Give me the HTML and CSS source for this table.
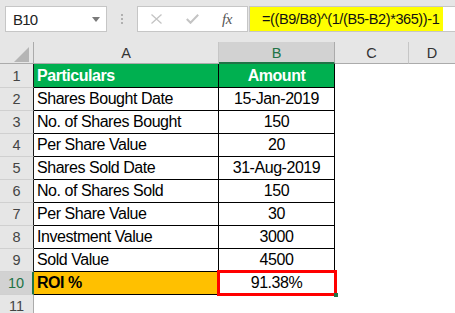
FILE: index.html
```html
<!DOCTYPE html>
<html>
<head>
<meta charset="utf-8">
<link rel="stylesheet" href="styles.css">
</head>
<body>
<div class="app">
  <div class="toolbar">
    <div class="namebox">
      <span class="namebox-text">B10</span>
      <svg class="namebox-arrow" width="8" height="5" viewBox="0 0 8 5"><path d="M0 0H8L4 5Z" fill="#7a7a7a"/></svg>
    </div>
    <div class="grip"><i></i><i></i><i></i></div>
    <div class="fxbox">
      <svg class="icon-cancel" width="11" height="10" viewBox="0 0 11 10"><path d="M0.5 0.5L10.5 9.5M10.5 0.5L0.5 9.5" stroke="#c4c4c4" stroke-width="1.3" fill="none"/></svg>
      <svg class="icon-enter" width="13" height="10" viewBox="0 0 13 10"><path d="M0.8 5L4.5 8.8L12.2 0.8" stroke="#c4c4c4" stroke-width="2" fill="none"/></svg>
      <span class="fx">fx</span>
    </div>
    <div class="formula"><span class="formula-hl">=((B9/B8)^(1/(B5-B2)*365))-1</span></div>
  </div>
  <div class="sheet">
    <div class="row head-row">
      <div class="rh corner"><svg width="16" height="15" viewBox="0 0 16 15"><path d="M15 0V15H0Z" fill="#b5b5b5"/></svg></div>
      <div class="ch col-a">A</div>
      <div class="ch col-b ch-sel">B</div>
      <div class="ch col-c">C</div>
      <div class="ch col-d">D</div>
    </div>
    <div class="row row-first">
      <div class="rh">1</div>
      <div class="cell col-a hdr">Particulars</div>
      <div class="cell col-b hdr center">Amount</div>
      <div class="blank col-c"></div><div class="blank col-d"></div>
    </div>
    <div class="row">
      <div class="rh">2</div>
      <div class="cell col-a">Shares Bought Date</div>
      <div class="cell col-b center">15-Jan-2019</div>
      <div class="blank col-c"></div><div class="blank col-d"></div>
    </div>
    <div class="row">
      <div class="rh">3</div>
      <div class="cell col-a">No. of Shares Bought</div>
      <div class="cell col-b center">150</div>
      <div class="blank col-c"></div><div class="blank col-d"></div>
    </div>
    <div class="row">
      <div class="rh">4</div>
      <div class="cell col-a">Per Share Value</div>
      <div class="cell col-b center">20</div>
      <div class="blank col-c"></div><div class="blank col-d"></div>
    </div>
    <div class="row">
      <div class="rh">5</div>
      <div class="cell col-a">Shares Sold Date</div>
      <div class="cell col-b center">31-Aug-2019</div>
      <div class="blank col-c"></div><div class="blank col-d"></div>
    </div>
    <div class="row">
      <div class="rh">6</div>
      <div class="cell col-a">No. of Shares Sold</div>
      <div class="cell col-b center">150</div>
      <div class="blank col-c"></div><div class="blank col-d"></div>
    </div>
    <div class="row">
      <div class="rh">7</div>
      <div class="cell col-a">Per Share Value</div>
      <div class="cell col-b center">30</div>
      <div class="blank col-c"></div><div class="blank col-d"></div>
    </div>
    <div class="row">
      <div class="rh">8</div>
      <div class="cell col-a">Investment Value</div>
      <div class="cell col-b center">3000</div>
      <div class="blank col-c"></div><div class="blank col-d"></div>
    </div>
    <div class="row">
      <div class="rh">9</div>
      <div class="cell col-a">Sold Value</div>
      <div class="cell col-b center">4500</div>
      <div class="blank col-c"></div><div class="blank col-d"></div>
    </div>
    <div class="row">
      <div class="rh rh-sel">10</div>
      <div class="cell col-a roi">ROI %</div>
      <div class="cell col-b center active">91.38%<span class="sel-box"></span><span class="fill-handle"></span></div>
      <div class="blank col-c"></div><div class="blank col-d"></div>
    </div>
    <div class="row">
      <div class="rh rh-plain">11</div>
      <div class="blank col-a"></div>
      <div class="blank col-b"></div>
      <div class="blank col-c"></div><div class="blank col-d"></div>
    </div>
  </div>
</div>
</body>
</html>
```

FILE: styles.css
```css
* { box-sizing: border-box; }
html, body { margin: 0; padding: 0; }
body {
  width: 455px;
  height: 313px;
  overflow: hidden;
  background: #ffffff;
  font-family: "Liberation Sans", Arial, sans-serif;
  color: #000;
}
.app { width: 455px; }

/* toolbar */
.toolbar {
  height: 42px;
  background: #e6e6e6;
  display: flex;
  align-items: flex-start;
  padding: 6px 0 0 5px;
}
.namebox {
  width: 102px;
  height: 26px;
  background: #fff;
  border: 1px solid #c6c6c6;
  display: flex;
  align-items: center;
  justify-content: space-between;
  padding: 0 6px 0 7px;
}
.namebox-text {
  font-size: 15px;
  letter-spacing: -0.8px;
  color: #222;
}
.grip {
  width: 30px;
  height: 26px;
  display: flex;
  flex-direction: column;
  align-items: center;
  justify-content: center;
  gap: 2px;
}
.grip i {
  display: block;
  width: 2px;
  height: 2px;
  background: #b0b0b0;
}
.fxbox {
  width: 111px;
  height: 26px;
  background: #fff;
  border: 1px solid #c6c6c6;
  display: flex;
  align-items: center;
  padding-left: 13px;
}
.icon-cancel { margin-right: 24px; }
.icon-enter { margin-right: 23px; }
.fx {
  font-family: "Liberation Serif", serif;
  font-style: italic;
  font-size: 15px;
  color: #555;
  letter-spacing: -0.5px;
}
.formula {
  flex: 1;
  height: 26px;
  margin-left: 1px;
  background: #fff;
  border: 1px solid #c6c6c6;
  border-right: none;
}
.formula-hl {
  display: block;
  width: 193px;
  height: 24px;
  background: #ffff00;
  padding-left: 12px;
  font-size: 14.5px;
  line-height: 24px;
  letter-spacing: -0.4px;
  color: #111;
  white-space: nowrap;
}

/* sheet */
.sheet { width: 455px; }
.row {
  display: flex;
  height: 23px;
}
.row-first { height: 24px; }
.head-row { height: 22px; }

.rh, .cell, .ch, .blank { flex: none; height: 100%; }
.rh { width: 34px; }
.col-a { width: 185px; }
.col-b { width: 116px; }
.col-c { width: 74px; }
.col-d { width: 46px; }

.rh {
  background: #e6e6e6;
  border-right: 1px solid #1a1a1a;
  border-bottom: 1px solid #d0d0d0;
  font-size: 14.5px;
  color: #444;
  text-align: center;
  display: flex;
  align-items: center;
  justify-content: center;
}
.corner {
  border-right: 1px solid #ababab;
  border-bottom: 1px solid #ababab;
  align-items: flex-end;
  justify-content: flex-end;
  padding: 0 3px 1px 0;
}
.corner svg { display: block; }
.rh-sel {
  background: #d2d2d2;
  border-right: 2px solid #217346;
  color: #217346;
}
.rh-plain { border-right: 1px solid #ababab; }

.ch {
  background: #e6e6e6;
  border-right: 1px solid #c6c6c6;
  border-bottom: 1px solid #ababab;
  font-size: 14.5px;
  color: #333;
  display: flex;
  align-items: center;
  justify-content: center;
  padding-top: 1px;
}
.ch-sel {
  background: #d2d2d2;
  border-right-color: #ababab;
  border-bottom: 2px solid #217346;
  color: #217346;
}
.col-d.ch { border-right: none; }

.cell {
  border-right: 1px solid #000;
  border-bottom: 1px solid #000;
  font-size: 16px;
  letter-spacing: -0.45px;
  padding-left: 3px;
  display: flex;
  align-items: center;
  white-space: nowrap;
  position: relative;
}
.center { justify-content: center; padding-left: 0; }
.hdr {
  background: #00b050;
  color: #fff;
  font-weight: bold;
}
.roi {
  background: #ffc000;
  font-weight: bold;
}
.blank { background: #fff; }

.sel-box {
  position: absolute;
  left: -2px;
  top: -2px;
  right: -3px;
  bottom: -2px;
  border: 3px solid #ff0000;
  pointer-events: none;
}
.fill-handle {
  position: absolute;
  right: -4px;
  bottom: -3px;
  width: 4px;
  height: 4px;
  background: #217346;
}
```
